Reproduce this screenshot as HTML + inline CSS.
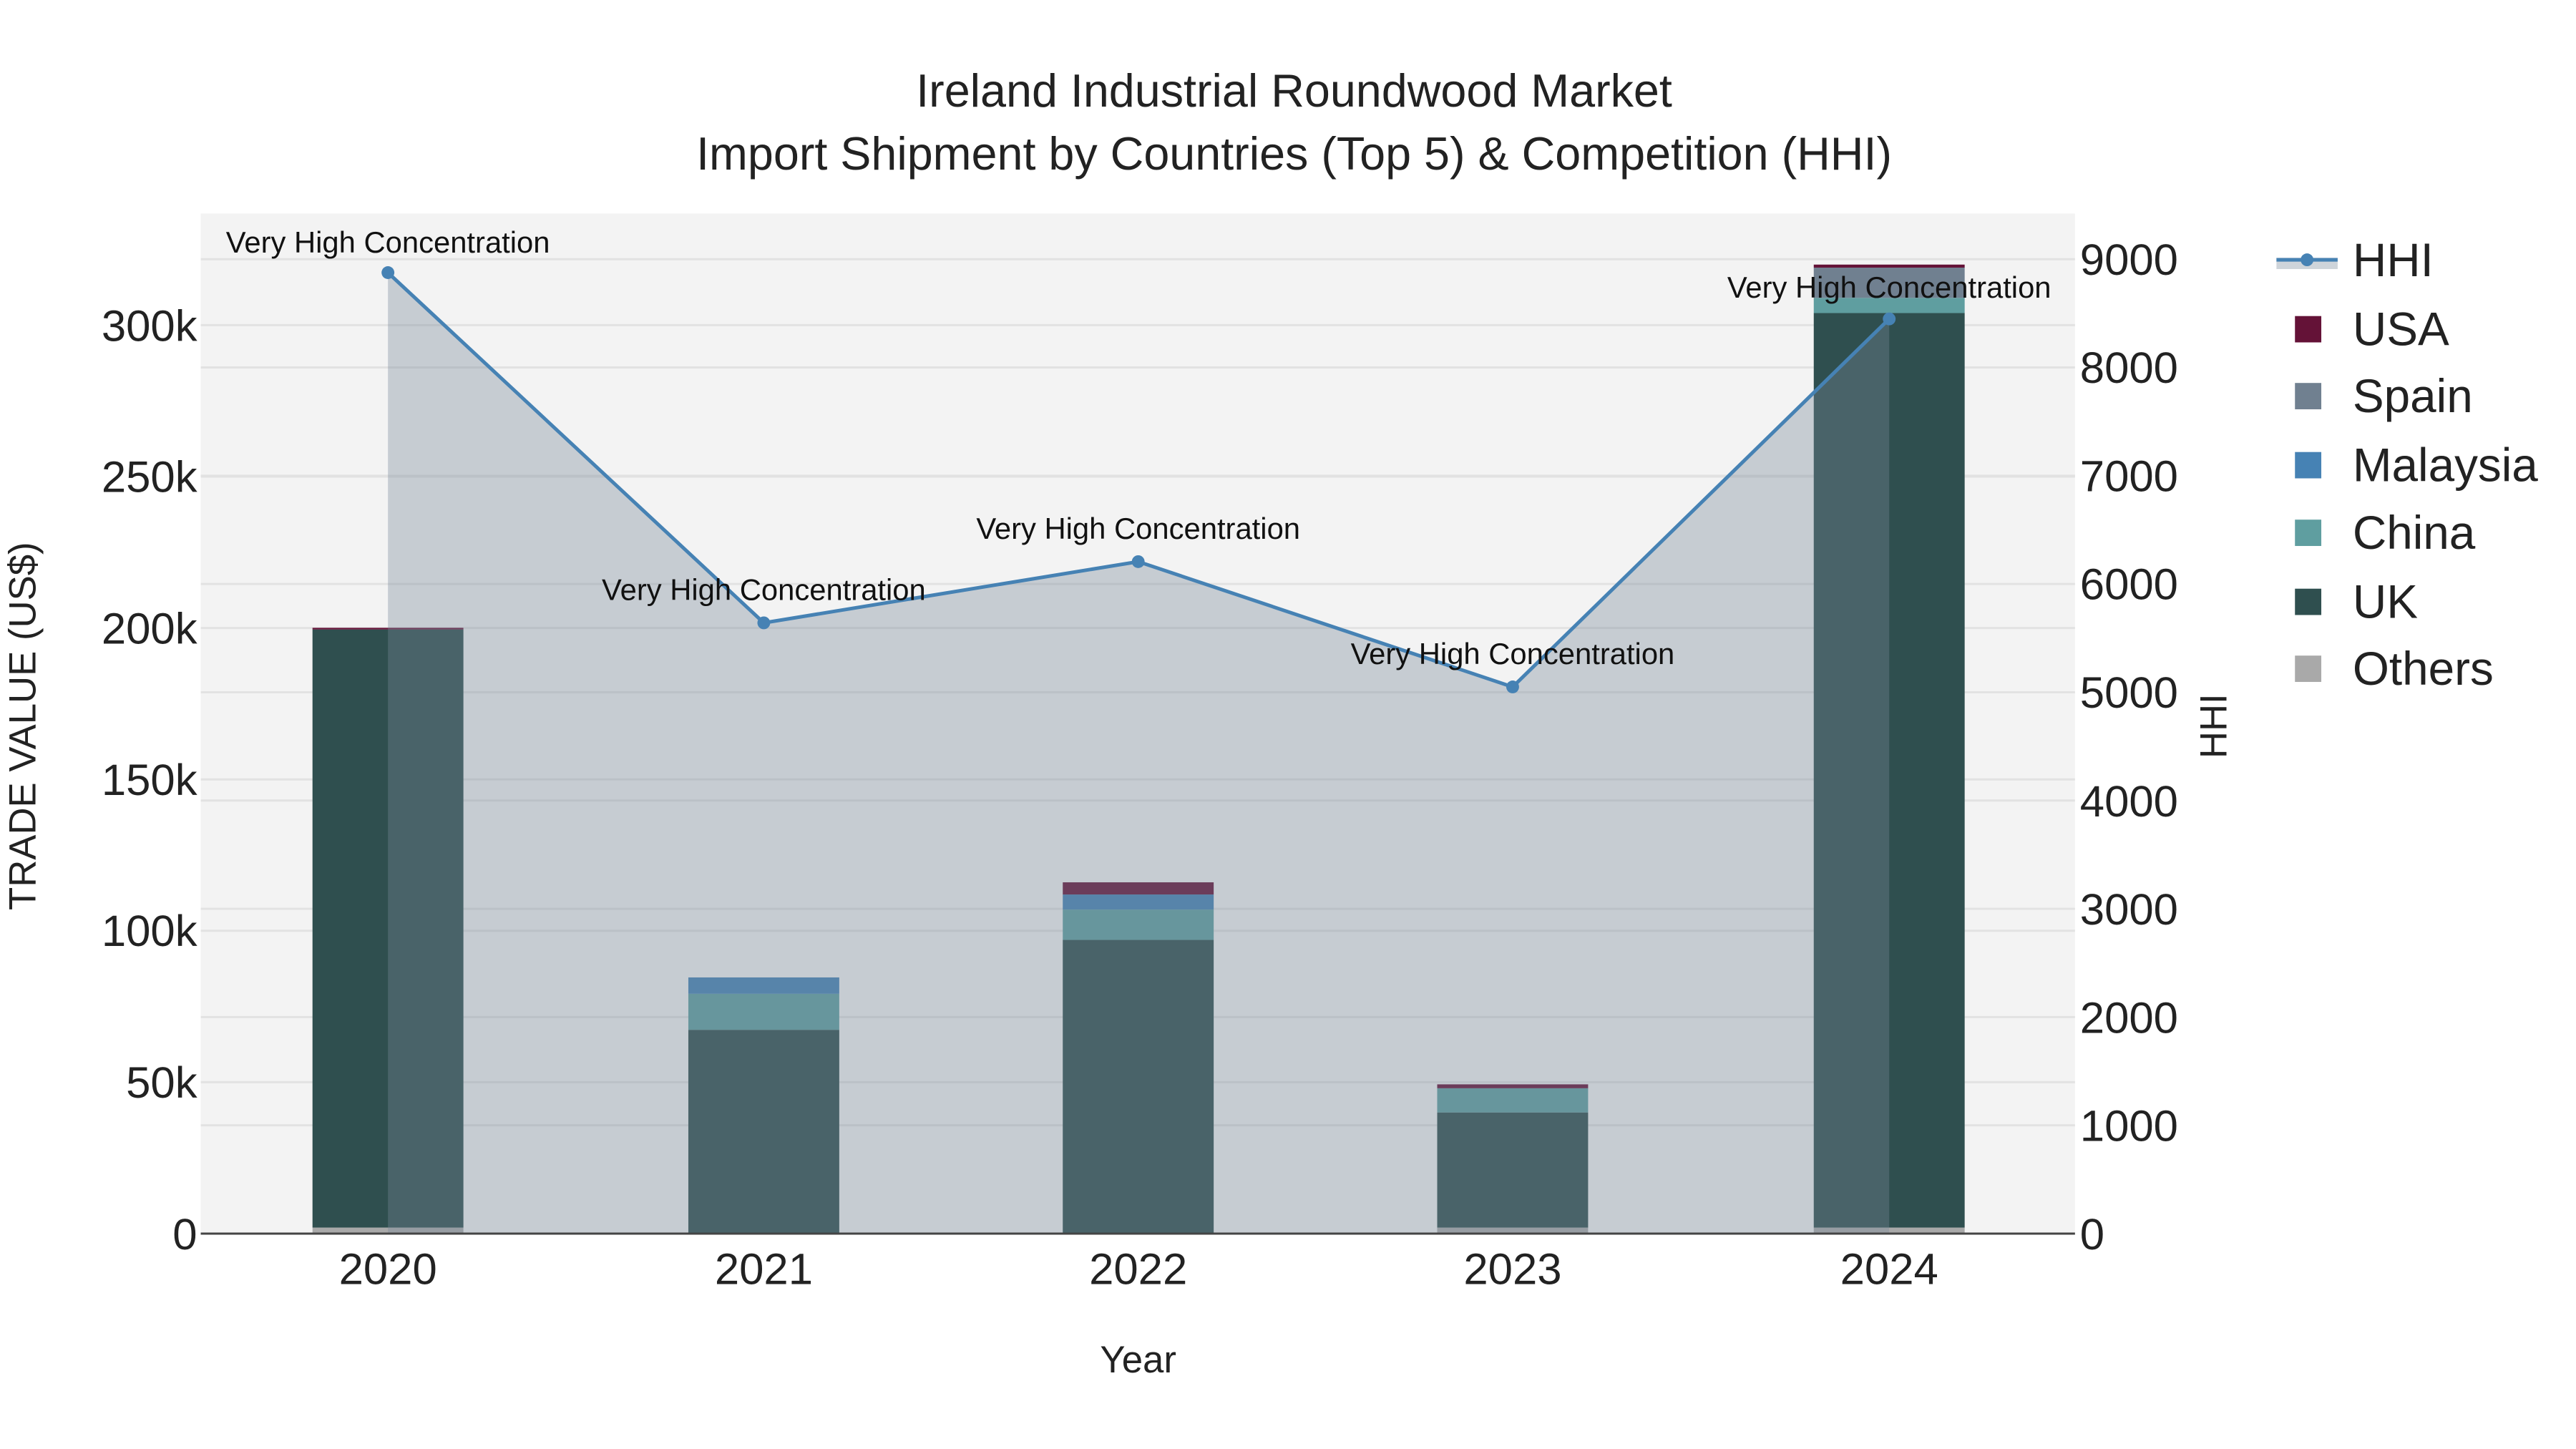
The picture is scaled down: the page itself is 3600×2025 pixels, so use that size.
<!DOCTYPE html>
<html><head><meta charset="utf-8"><style>html,body{margin:0;padding:0;background:#fff}svg{display:block}</style></head>
<body>
<svg width="3600" height="2025" viewBox="0 0 3600 2025" xmlns="http://www.w3.org/2000/svg" font-family="'Liberation Sans', sans-serif">
<rect width="3600" height="2025" fill="#fff"/>
<g transform="scale(0.9948)">
<rect x="282" y="300" width="2633" height="1433" fill="#f3f3f3"/>
<g stroke="#e2e2e2" stroke-width="3">
<line x1="282" x2="2915" y1="1520.3" y2="1520.3"/><line x1="282" x2="2915" y1="1307.6" y2="1307.6"/><line x1="282" x2="2915" y1="1094.9" y2="1094.9"/><line x1="282" x2="2915" y1="882.2" y2="882.2"/><line x1="282" x2="2915" y1="669.5" y2="669.5"/><line x1="282" x2="2915" y1="456.8" y2="456.8"/>
<line x1="282" x2="2915" y1="1580.9" y2="1580.9"/><line x1="282" x2="2915" y1="1428.8" y2="1428.8"/><line x1="282" x2="2915" y1="1276.7" y2="1276.7"/><line x1="282" x2="2915" y1="1124.6" y2="1124.6"/><line x1="282" x2="2915" y1="972.5" y2="972.5"/><line x1="282" x2="2915" y1="820.4" y2="820.4"/><line x1="282" x2="2915" y1="668.3" y2="668.3"/><line x1="282" x2="2915" y1="516.2" y2="516.2"/><line x1="282" x2="2915" y1="364.1" y2="364.1"/>
</g>
<g>
<rect x="439" y="1724.5" width="212" height="8.5" fill="#a9a9a9"/>
<rect x="439" y="884.3" width="212" height="840.2" fill="#2f4f4f"/>
<rect x="439" y="882" width="212" height="2.3" fill="#641237"/>
<rect x="967" y="1446.7" width="212" height="286.3" fill="#2f4f4f"/>
<rect x="967" y="1396.1" width="212" height="50.6" fill="#5f9ea0"/>
<rect x="967" y="1373.1" width="212" height="23" fill="#4682b4"/>
<rect x="1493" y="1320.4" width="212" height="412.6" fill="#2f4f4f"/>
<rect x="1493" y="1277.8" width="212" height="42.6" fill="#5f9ea0"/>
<rect x="1493" y="1256.6" width="212" height="21.2" fill="#4682b4"/>
<rect x="1493" y="1239.5" width="212" height="17.1" fill="#641237"/>
<rect x="2019" y="1724.5" width="212" height="8.5" fill="#a9a9a9"/>
<rect x="2019" y="1562.8" width="212" height="161.7" fill="#2f4f4f"/>
<rect x="2019" y="1528.8" width="212" height="34" fill="#5f9ea0"/>
<rect x="2019" y="1523.3" width="212" height="5.5" fill="#641237"/>
<rect x="2548" y="1724.5" width="212" height="8.5" fill="#a9a9a9"/>
<rect x="2548" y="439.8" width="212" height="1284.7" fill="#2f4f4f"/>
<rect x="2548" y="418.5" width="212" height="21.3" fill="#5f9ea0"/>
<rect x="2548" y="376" width="212" height="42.5" fill="#708090"/>
<rect x="2548" y="371.7" width="212" height="4.3" fill="#641237"/>
</g>
<polygon points="545,1733 545,383 1073,875 1599,789 2125,965 2654,448 2654,1733" fill="rgba(119,136,153,0.36)"/>
<polyline points="545,383 1073,875 1599,789 2125,965 2654,448" fill="none" stroke="#4682b4" stroke-width="5"/>
<g fill="#4682b4"><circle cx="545" cy="383" r="9"/><circle cx="1073" cy="875" r="9"/><circle cx="1599" cy="789" r="9"/><circle cx="2125" cy="965" r="9"/><circle cx="2654" cy="448" r="9"/></g>
<line x1="282" x2="2915" y1="1733" y2="1733" stroke="#444" stroke-width="3"/>
<g font-size="42" fill="#111" text-anchor="middle">
<text x="545" y="355">Very High Concentration</text>
<text x="1073" y="843">Very High Concentration</text>
<text x="1599" y="757">Very High Concentration</text>
<text x="2125" y="933">Very High Concentration</text>
<text x="2654" y="418">Very High Concentration</text>
</g>
<g font-size="62" fill="#222" text-anchor="end">
<text x="277" y="1755">0</text><text x="277" y="1542">50k</text><text x="277" y="1329">100k</text><text x="277" y="1117">150k</text><text x="277" y="904">200k</text><text x="277" y="691">250k</text><text x="277" y="479">300k</text>
</g>
<g font-size="62" fill="#222">
<text x="2922" y="1755">0</text><text x="2922" y="1603">1000</text><text x="2922" y="1451">2000</text><text x="2922" y="1299">3000</text><text x="2922" y="1147">4000</text><text x="2922" y="994">5000</text><text x="2922" y="842">6000</text><text x="2922" y="690">7000</text><text x="2922" y="538">8000</text><text x="2922" y="386">9000</text>
</g>
<g font-size="62" fill="#222" text-anchor="middle">
<text x="545" y="1804">2020</text><text x="1073" y="1804">2021</text><text x="1599" y="1804">2022</text><text x="2125" y="1804">2023</text><text x="2654" y="1804">2024</text>
</g>
<text x="1599" y="1928" font-size="53" fill="#222" text-anchor="middle">Year</text>
<text transform="translate(50,1020) rotate(-90)" font-size="53" fill="#222" text-anchor="middle">TRADE VALUE (US$)</text>
<text transform="translate(3128,1020) rotate(-90)" font-size="53" fill="#222" text-anchor="middle">HHI</text>
<g font-size="65" fill="#222" text-anchor="middle">
<text x="1818" y="150">Ireland Industrial Roundwood Market</text>
<text x="1818" y="238">Import Shipment by Countries (Top 5) &amp; Competition (HHI)</text>
</g>
<rect x="3198" y="362" width="86" height="16" fill="rgba(119,136,153,0.36)"/>
<line x1="3198" x2="3284" y1="365" y2="365" stroke="#4682b4" stroke-width="5"/>
<circle cx="3241" cy="365" r="9" fill="#4682b4"/>
<rect x="3224" y="444" width="37" height="37" fill="#641237"/>
<rect x="3224" y="538" width="37" height="37" fill="#708090"/>
<rect x="3224" y="635" width="37" height="37" fill="#4682b4"/>
<rect x="3224" y="730" width="37" height="37" fill="#5f9ea0"/>
<rect x="3224" y="827" width="37" height="37" fill="#2f4f4f"/>
<rect x="3224" y="921" width="37" height="37" fill="#a9a9a9"/>
<g font-size="66" fill="#222">
<text x="3305" y="388">HHI</text><text x="3305" y="485">USA</text><text x="3305" y="579">Spain</text><text x="3305" y="676">Malaysia</text><text x="3305" y="771">China</text><text x="3305" y="868">UK</text><text x="3305" y="962">Others</text>
</g>
</g>
</svg>
</body></html>
